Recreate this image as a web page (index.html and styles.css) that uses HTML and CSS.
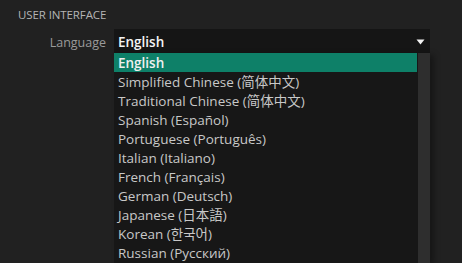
FILE: index.html
```html
<!DOCTYPE html>
<html>
<head>
<meta charset="utf-8">
<link rel="stylesheet" href="styles.css">
</head>
<body>
<div class="panel">
  <div class="section-title">USER INTERFACE</div>
  <div class="field">
    <div class="label">Language</div>
    <div class="select">
      <div class="select-value">English</div>
      <svg class="arrow" width="9" height="6" viewBox="0 0 9 6"><path d="M0.5 0.5 L8.5 0.5 L4.5 5.5 Z" fill="#f2f2f2"/></svg>
      <div class="menu">
        <div class="options">
          <div class="option selected">English</div>
          <div class="option">Simplified Chinese (简体中文)</div>
          <div class="option">Traditional Chinese (简体中文)</div>
          <div class="option">Spanish (Español)</div>
          <div class="option">Portuguese (Português)</div>
          <div class="option">Italian (Italiano)</div>
          <div class="option">French (Français)</div>
          <div class="option">German (Deutsch)</div>
          <div class="option">Japanese (日本語)</div>
          <div class="option">Korean (한국어)</div>
          <div class="option">Russian (Русский)</div>
        </div>
        <div class="scrollbar"></div>
      </div>
    </div>
  </div>
</div>
</body>
</html>
```

FILE: styles.css
```css
html, body {
  margin: 0;
  padding: 0;
  background: #212121;
  height: 100%;
  overflow: hidden;
}
.panel {
  font-family: "Open Sans", "Noto Sans", "Noto Sans CJK SC", sans-serif;
  padding-top: 7px;
}
.section-title {
  padding-left: 18px;
  font-size: 11.5px;
  color: #b4b4b4;
  line-height: 15px;
  letter-spacing: -0.1px;
}
.field {
  display: flex;
  align-items: flex-start;
  margin-top: 7px;
}
.label {
  width: 106px;
  text-align: right;
  font-size: 12.5px;
  color: #9a9a9a;
  line-height: 24px;
  padding-top: 2px;
  margin-right: 8px;
}
.select {
  position: relative;
  width: 316px;
  height: 24px;
  background: #151515;
  display: flex;
  align-items: center;
  padding-left: 4px;
  box-sizing: border-box;
}
.select-value {
  flex: 1;
  font-size: 13.5px;
  color: #f4f4f4;
  line-height: 24px;
  padding-top: 2px;
  font-weight: 600;
}
.arrow {
  margin-right: 5px;
  margin-top: 1px;
}
.menu {
  position: absolute;
  left: 0;
  top: 24px;
  width: 316px;
  height: 210px;
  background: #171717;
  display: flex;
  box-shadow: 4px 2px 6px rgba(0,0,0,0.35);
}
.options {
  flex: 1;
}
.option {
  height: 19px;
  line-height: 21px;
  padding-left: 4px;
  font-size: 13.5px;
  color: #c8c8c8;
  white-space: nowrap;
}
.option.selected {
  background: #0e8068;
  color: #f0f0f0;
  font-weight: 600;
}
.scrollbar {
  width: 12px;
  margin-left: 1px;
  background: #2e2e2e;
}
```
